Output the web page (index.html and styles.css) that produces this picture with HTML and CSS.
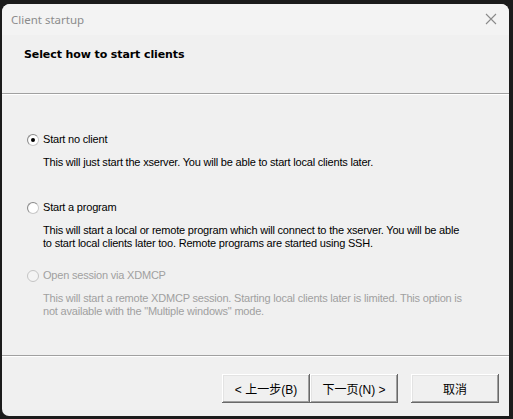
FILE: index.html
```html
<!DOCTYPE html>
<html>
<head>
<meta charset="utf-8">
<link rel="stylesheet" href="styles.css">
</head>
<body>
<div class="window">
  <div class="titlebar">
    <span class="title">Client startup</span>
    <svg class="close" width="12" height="12" viewBox="0 0 12 12"><path d="M1 1L11 11M11 1L1 11" stroke="#8a8a8a" stroke-width="1.1" fill="none"/></svg>
  </div>
  <div class="header">
    <div class="heading">Select how to start clients</div>
  </div>
  <div class="content">
    <div class="option">
      <div class="label-row"><span class="radio checked"></span><span class="label">Start no client</span></div>
      <div class="desc">This will just start the xserver. You will be able to start local clients later.</div>
    </div>
    <div class="option">
      <div class="label-row"><span class="radio"></span><span class="label">Start a program</span></div>
      <div class="desc">This will start a local or remote program which will connect to the xserver. You will be able<br>to start local clients later too. Remote programs are started using SSH.</div>
    </div>
    <div class="option disabled">
      <div class="label-row"><span class="radio"></span><span class="label">Open session via XDMCP</span></div>
      <div class="desc">This will start a remote XDMCP session. Starting local clients later is limited. This option is<br>not available with the "Multiple windows" mode.</div>
    </div>
  </div>
  <div class="footer">
    <button class="btn">&lt; 上一步(B)</button>
    <button class="btn">下一页(N) &gt;</button>
    <button class="btn cancel">取消</button>
  </div>
</div>
</body>
</html>
```

FILE: styles.css
```css
html, body {
  margin: 0;
  padding: 0;
  background: #1b1b1b;
  width: 513px;
  height: 419px;
  overflow: hidden;
}
.window {
  margin: 4px 0 0 2px;
  width: 507px;
  height: 412px;
  background: #f0f0f0;
  border-radius: 8px 8px 0 7px;
  display: flex;
  flex-direction: column;
  overflow: hidden;
  font-family: "Liberation Sans", Arial, sans-serif;
  font-size: 11px;
  color: #000;
}
.titlebar {
  height: 31px;
  flex: none;
  background: #f3f3f3;
  display: flex;
  align-items: center;
  justify-content: space-between;
  padding: 0 9px 0 9px;
}
.title {
  font-family: "Noto Sans", "Open Sans", sans-serif;
  font-size: 11.5px;
  color: #8c8c8c;
  margin-top: -1px;
}
.close {
  margin-right: 3px;
  margin-top: -2px;
}
.header {
  height: 59px;
  flex: none;
  border-bottom: 1px solid #a0a0a0;
  box-shadow: 0 1px 0 #ffffff;
  box-sizing: border-box;
  padding: 13px 0 0 22px;
}
.heading {
  font-family: "DejaVu Sans", sans-serif;
  font-weight: bold;
  font-size: 11px;
  line-height: 14px;
  letter-spacing: -0.1px;
}
.content {
  flex: 1;
  padding: 39px 0 0 25px;
  border-bottom: 1px solid #a0a0a0;
  box-shadow: 0 1px 0 #ffffff;
  letter-spacing: -0.2px;
}
.option {
  margin-bottom: 19px;
}
.label-row {
  display: flex;
  align-items: center;
  height: 13px;
}
.radio {
  width: 12px;
  height: 12px;
  box-sizing: border-box;
  border-radius: 50%;
  border: 1px solid #8a8a8a;
  border-bottom-color: #c8c8c8;
  border-right-color: #c8c8c8;
  background: radial-gradient(circle at 60% 60%, #ffffff 55%, #e0e0e0 100%);
  margin-right: 4px;
  position: relative;
  flex: none;
}
.radio.checked::after {
  content: "";
  position: absolute;
  left: 3px;
  top: 3px;
  width: 4px;
  height: 4px;
  border-radius: 50%;
  background: #000;
}
.label {
  line-height: 13px;
}
.desc {
  margin: 10px 0 0 16px;
  line-height: 13px;
  height: 26px;
}
.disabled {
  color: #a0a0a0;
}
.disabled .radio {
  border-color: #c4c4c4;
  background: #f4f4f4;
}
.footer {
  height: 60px;
  flex: none;
  display: flex;
  align-items: flex-start;
  padding: 18px 0 0 220px;
  box-sizing: border-box;
}
.btn {
  width: 88px;
  height: 29px;
  margin: 0;
  padding: 0;
  background: #f0f0f0;
  border: none;
  box-shadow: inset -1px -1px 0 #696969, inset 1px 1px 0 #ffffff, inset -2px -2px 0 #a0a0a0, inset 2px 2px 0 #e3e3e3;
  font-family: "Liberation Sans", "Noto Sans CJK SC", sans-serif;
  font-size: 12px;
  color: #000;
}
.btn.cancel {
  margin-left: 13px;
}
```
